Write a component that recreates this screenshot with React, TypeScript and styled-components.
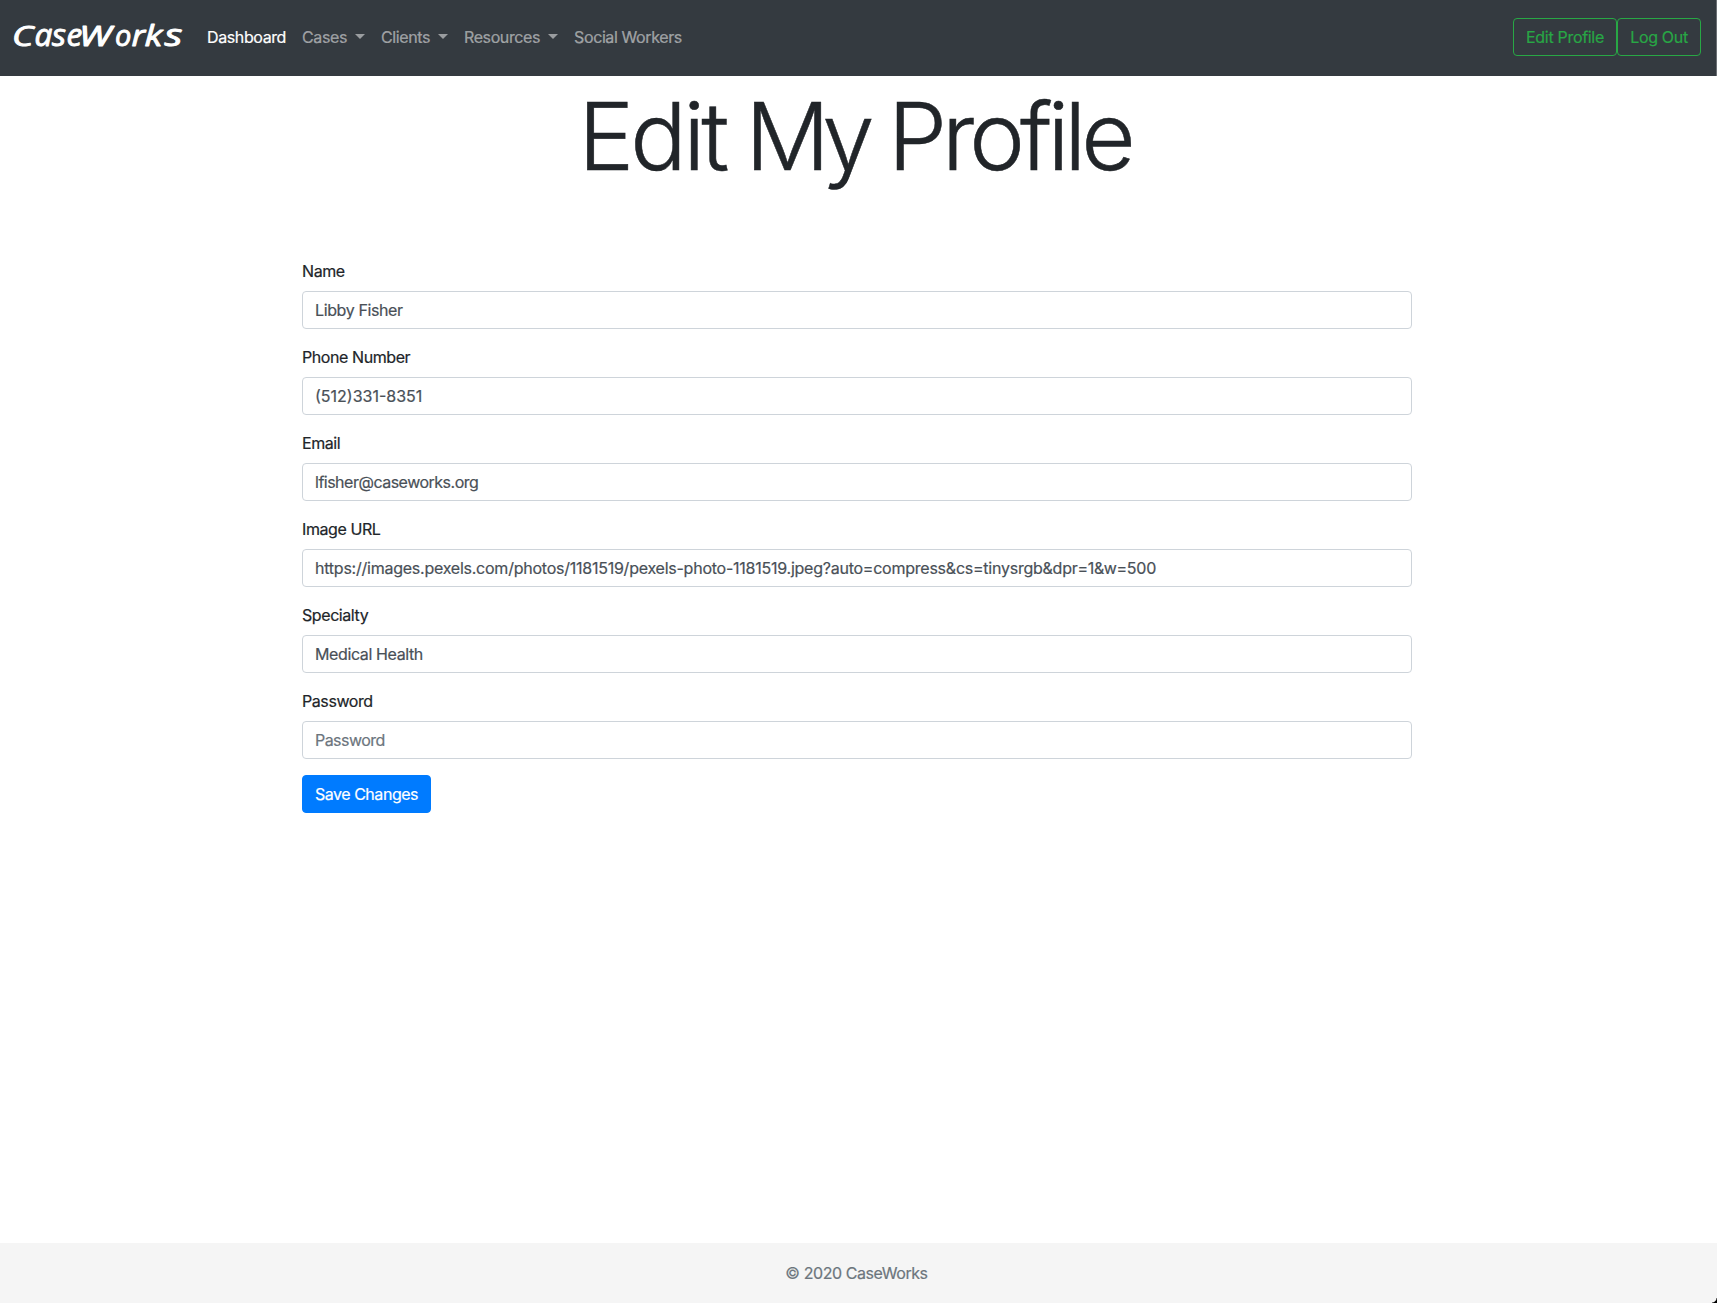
import React from "react";
import styled, { createGlobalStyle } from "styled-components";

const GlobalStyle = createGlobalStyle`
  *, *::before, *::after { box-sizing: border-box; }
  body {
    margin: 0;
    background: #fff;
    color: #212529;
    font: 400 16px/24px Inter, "Liberation Sans", sans-serif;
    letter-spacing: -0.42px;
    -webkit-text-stroke: 0.2px;
  }
`;

const Page = styled.div`
  display: flex;
  flex-direction: column;
  height: 1303px;
  overflow: hidden;
`;

const Navbar = styled.nav`
  display: flex;
  align-items: flex-start;
  height: 76px;
  padding: 18px 15px 0 13px;
  background: #343a40;
  border-right: 1px solid #6b7075;
`;

const Brand = styled.a`
  display: block;
  width: 185px;
  height: 38px;
`;

const BrandMark = styled.svg`
  display: block;
  margin-top: -12px;
  font-family: "Open Sans", "Noto Sans", sans-serif;
  font-style: italic;
  font-weight: 400;
  fill: #fff;
  stroke: #fff;
  stroke-width: 0.9px;
  stroke-linejoin: round;
  letter-spacing: 0;
`;

const NavLinks = styled.div`
  display: flex;
  flex: 1;
  gap: 16px;
  padding: 7px 0 0 9px;
`;

const NavLink = styled.a<{ $active?: boolean }>`
  color: ${(p) => (p.$active ? "#fff" : "rgba(255, 255, 255, 0.5)")};
  letter-spacing: -0.39px;
  white-space: nowrap;
`;

const Caret = styled.span`
  display: inline-block;
  margin-left: 8px;
  vertical-align: 4px;
  border-top: 5px solid;
  border-right: 5px solid transparent;
  border-left: 5px solid transparent;
`;

const Button = styled.button<{ $primary?: boolean; $width: number }>`
  width: ${(p) => p.$width}px;
  height: 38px;
  padding: 0;
  border: 1px solid ${(p) => (p.$primary ? "#007bff" : "#28a745")};
  border-radius: 4px;
  background: ${(p) => (p.$primary ? "#007bff" : "transparent")};
  color: ${(p) => (p.$primary ? "#fff" : "#28a745")};
  font: inherit;
  letter-spacing: ${(p) => (p.$primary ? -0.46 : -0.31)}px;
  white-space: nowrap;
`;

const Main = styled.main`
  flex: 1;
  width: 1110px;
  margin-left: 302px;
`;

const Title = styled.h1`
  margin: 3px 0 0;
  padding-right: 5px;
  height: 180px;
  font-size: 94px;
  font-weight: 300;
  line-height: 115px;
  letter-spacing: -4.7px;
  word-spacing: -3.5px;
  text-align: center;
  white-space: nowrap;
  -webkit-text-stroke: 0.5px;
`;

const Word = styled.span<{ $tracking: number; $after?: number }>`
  margin-right: ${(p) => p.$after ?? 0}px;
  letter-spacing: ${(p) => p.$tracking}px;
`;

const Field = styled.label`
  display: flex;
  flex-direction: column;
  gap: 8px;
  margin-bottom: 16px;
`;

const Input = styled.input<{ $tracking?: number }>`
  width: 100%;
  height: 38px;
  padding: 6px 12px;
  border: 1px solid #ced4da;
  border-radius: 4px;
  background: #fff;
  color: #495057;
  font: inherit;
  letter-spacing: ${(p) => p.$tracking ?? -0.38}px;
  &::placeholder { color: #6c757d; opacity: 1; }
`;

const Footer = styled.footer`
  position: relative;
  height: 60px;
  padding-right: 4px;
  background: #f5f5f5;
  color: #6c757d;
  line-height: 60px;
  text-align: center;
`;

const Corner = styled.span`
  position: absolute;
  right: 0;
  bottom: 0;
  width: 5px;
  height: 5px;
  background: radial-gradient(circle at 0 0, transparent 4px, #000 5px);
`;

const letters = [
  { char: "C", x: -1, size: 28, stretch: 1.3 },
  { char: "a", x: 21.5, size: 31, stretch: 1.02 },
  { char: "s", x: 39, size: 31, stretch: 1.05 },
  { char: "e", x: 53.5, size: 31, stretch: 1.02 },
  { char: "W", x: 66, size: 27, stretch: 1.4 },
  { char: "o", x: 102, size: 29, stretch: 1 },
  { char: "r", x: 118.5, size: 30, stretch: 1.15 },
  { char: "k", x: 131.5, size: 30, stretch: 1.22 },
  { char: "s", x: 151.5, size: 31, stretch: 1.35 },
];

const fields = [
  { label: "Name", type: "text", value: "Libby Fisher" },
  { label: "Phone Number", type: "text", value: "(512)331-8351", tracking: 0 },
  { label: "Email", type: "text", value: "lfisher@caseworks.org", tracking: -0.5 },
  {
    label: "Image URL",
    type: "text",
    tracking: -0.24,
    value:
      "https://images.pexels.com/photos/1181519/pexels-photo-1181519.jpeg?auto=compress&cs=tinysrgb&dpr=1&w=500",
  },
  { label: "Specialty", type: "text", value: "Medical Health" },
  { label: "Password", type: "password", value: "", placeholder: "Password", tracking: -0.55 },
];

export default function App() {
  return (
    <Page>
      <GlobalStyle />
      <Navbar>
        <Brand>
          <BrandMark width="185" height="52" aria-label="CaseWorks">
            {letters.map((l, i) => (
              <text
                key={i}
                transform={`translate(${l.x} 39.5) scale(${l.stretch} 1)`}
                fontSize={l.size}
              >
                {l.char}
              </text>
            ))}
          </BrandMark>
        </Brand>
        <NavLinks>
          <NavLink $active>Dashboard</NavLink>
          <NavLink>Cases<Caret /></NavLink>
          <NavLink>Clients<Caret /></NavLink>
          <NavLink>Resources<Caret /></NavLink>
          <NavLink>Social Workers</NavLink>
        </NavLinks>
        <Button $width={104}>Edit Profile</Button>
        <Button $width={84}>Log Out</Button>
      </Navbar>
      <Main>
        <Title>
          <Word $tracking={-3.8} $after={1.5}>Edit</Word>{" "}
          <Word $tracking={-8} $after={3.3}>My</Word>{" "}
          <Word $tracking={-5}>Profile</Word>
        </Title>
        <form>
          {fields.map((f) => (
            <Field key={f.label}>
              {f.label}
              <Input
                type={f.type}
                defaultValue={f.value}
                placeholder={f.placeholder}
                $tracking={f.tracking}
              />
            </Field>
          ))}
          <Button type="button" $primary $width={129}>Save Changes</Button>
        </form>
      </Main>
      <Footer>
        © 2020 CaseWorks
        <Corner />
      </Footer>
    </Page>
  );
}
